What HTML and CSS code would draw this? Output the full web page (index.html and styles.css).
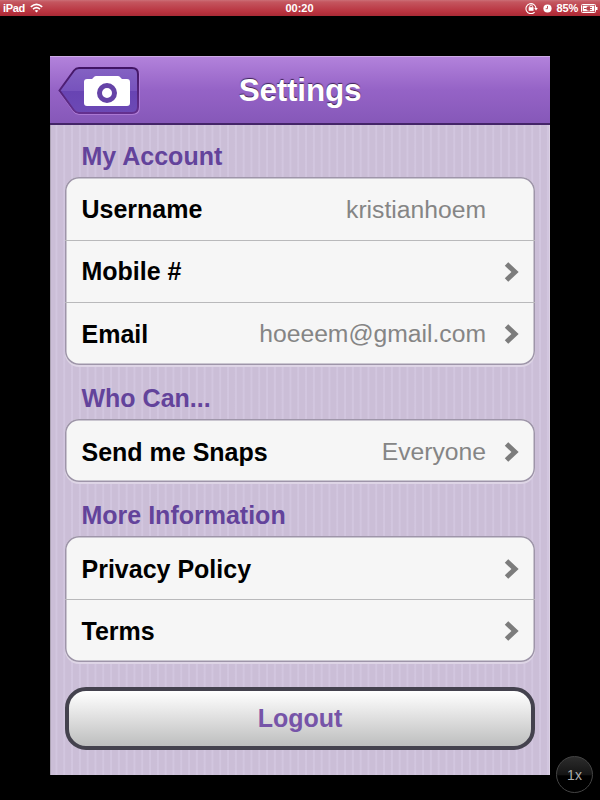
FILE: index.html
```
<!DOCTYPE html>
<html lang="en">
<head>
    <meta charset="UTF-8">
    <meta name="viewport" content="width=device-width, initial-scale=1.0">
    <title>Settings</title>
    <link rel="stylesheet" href="styles.css">
</head>
<body>

    <div class="status-bar">
        <div class="status-left">
            <span class="device">iPad</span>
            <svg class="wifi" width="13" height="10" viewBox="0 0 13 10">
                <path d="M0.8 3.8 Q6.5 -1 12.2 3.8 M3 6.2 Q6.5 3.2 10 6.2" fill="none" stroke="#fff" stroke-width="1.6"/>
                <path d="M4.7 7.7 Q6.5 6.2 8.3 7.7 L6.5 9.6 Z" fill="#fff"/>
            </svg>
        </div>
        <span class="clock">00:20</span>
        <div class="status-right">
            <svg class="lock" width="13" height="12" viewBox="0 0 13 12">
                <path d="M9.6 10.1 A5 5 0 1 1 11 6.6" fill="none" stroke="#fff" stroke-width="1.1"/>
                <path d="M9.2 6 L12.8 6 L11 8.5 Z" fill="#fff"/>
                <rect x="3.7" y="5.2" width="4.8" height="3.6" fill="#fff"/>
                <path d="M4.7 5.4 V4.5 A1.4 1.4 0 0 1 7.5 4.5 V5.4" fill="none" stroke="#fff" stroke-width="0.9"/>
            </svg>
            <svg class="alarm" width="9" height="9" viewBox="0 0 9 9">
                <circle cx="4.5" cy="4.5" r="4.1" fill="#fff"/>
                <path d="M4.5 2 V4.7 H2.7" fill="none" stroke="#b9444c" stroke-width="0.9"/>
            </svg>
            <span class="percent">85%</span>
            <svg class="battery" width="17" height="9" viewBox="0 0 17 9">
                <rect x="0.5" y="0.5" width="14" height="8" rx="1" fill="none" stroke="#fff"/>
                <path d="M1.7 1.7 H13.3 V7.3 H1.7 Z" fill="#fff"/>
                <path d="M15 3 H16.5 V6 H15 Z" fill="#fff"/>
                <path d="M3 4.5 H5.5" stroke="#b9444c" stroke-width="1"/>
                <path d="M9 2.3 H7.7 Q5.3 2.3 5.3 4.5 Q5.3 6.7 7.7 6.7 H9 Z" fill="#b9444c"/>
                <path d="M9 3.5 H11 M9 5.5 H11" stroke="#b9444c" stroke-width="0.9"/>
            </svg>
        </div>
    </div>

    <div class="app">
        <div class="header">
            <svg class="back-button" width="84" height="50" viewBox="0 0 84 50">
                <defs>
                    <linearGradient id="backFill" x1="0" y1="0" x2="0" y2="1">
                        <stop offset="0" stop-color="#8462c3"/>
                        <stop offset="0.5" stop-color="#7753bd"/>
                        <stop offset="0.52" stop-color="#6844b3"/>
                        <stop offset="1" stop-color="#6c49b5"/>
                    </linearGradient>
                    <linearGradient id="backEdge" x1="0" y1="0" x2="0" y2="1">
                        <stop offset="0" stop-color="#421565"/>
                        <stop offset="1" stop-color="#64308f"/>
                    </linearGradient>
                </defs>
                <path d="M21 4.5 H75 Q81 4.5 81 10.5 V43 Q81 49 75 49 H21 Q18 49 16 46.5 L2 27 L16 7 Q18 4.5 21 4.5 Z" fill="none" stroke="#b583da" stroke-width="1.5"/>
                <path d="M21 3 H74 Q80 3 80 9 V42 Q80 48 74 48 H21 Q18 48 16 45.5 L1.5 25.5 L16 5.5 Q18 3 21 3 Z" fill="url(#backFill)" stroke="url(#backEdge)" stroke-width="2"/>
                <path d="M29 14 H34 L36.5 11.5 Q37 11 38 11 H60 Q61 11 61.5 11.5 L64 14 H69 Q72 14 72 17 V38 Q72 41 69 41 H29 Q26 41 26 38 V17 Q26 14 29 14 Z" fill="#fff"/>
                <circle cx="49" cy="28" r="7.5" fill="#fff" stroke="#6543a7" stroke-width="5"/>
            </svg>
            <h1>Settings</h1>
        </div>

        <div class="content">
            <h2>My Account</h2>
            <div class="group">
                <div class="row">
                    <span class="label">Username</span>
                    <span class="value">kristianhoem</span>
                </div>
                <div class="row">
                    <span class="label">Mobile #</span>
                    <svg class="chevron" width="16" height="22" viewBox="0 0 16 22"><path d="M2.5 3 L11 11 L2.5 19" /></svg>
                </div>
                <div class="row">
                    <span class="label">Email</span>
                    <span class="value">hoeeem@gmail.com</span>
                    <svg class="chevron" width="16" height="22" viewBox="0 0 16 22"><path d="M2.5 3 L11 11 L2.5 19" /></svg>
                </div>
            </div>

            <h2>Who Can...</h2>
            <div class="group">
                <div class="row">
                    <span class="label">Send me Snaps</span>
                    <span class="value">Everyone</span>
                    <svg class="chevron" width="16" height="22" viewBox="0 0 16 22"><path d="M2.5 3 L11 11 L2.5 19" /></svg>
                </div>
            </div>

            <h2>More Information</h2>
            <div class="group">
                <div class="row">
                    <span class="label">Privacy Policy</span>
                    <svg class="chevron" width="16" height="22" viewBox="0 0 16 22"><path d="M2.5 3 L11 11 L2.5 19" /></svg>
                </div>
                <div class="row">
                    <span class="label">Terms</span>
                    <svg class="chevron" width="16" height="22" viewBox="0 0 16 22"><path d="M2.5 3 L11 11 L2.5 19" /></svg>
                </div>
            </div>

            <button type="button" class="logout">Logout</button>
        </div>
    </div>

    <div class="scale-button">1x</div>

</body>
</html>
```
FILE: styles.css
```
* {
    box-sizing: border-box;
}
body {
    font-family: "Liberation Sans", Arial, sans-serif;
    background-color: #000;
    margin: 0;
    height: 800px;
    overflow: hidden;
}

/* Status bar */
.status-bar {
    display: grid;
    grid-template-columns: 1fr auto 1fr;
    align-items: center;
    height: 16px;
    padding: 0 2px 0 3px;
    background: linear-gradient(#cb6f76 0, #c4565f 2px, #b8323e 12px, #a92a35 16px);
    color: #fff;
    font-size: 11px;
    font-weight: bold;
}
.status-left, .status-right {
    display: flex;
    align-items: center;
}
.device {
    letter-spacing: -0.3px;
}
.clock {
    margin-left: -2px;
}
.status-left {
    gap: 5px;
}
.status-right {
    justify-content: flex-end;
    gap: 5px;
}
.percent {
    letter-spacing: -0.2px;
}
.battery {
    margin-left: -2px;
}

/* App window */
.app {
    width: 500px;
    height: 719px;
    margin: 40px auto 0;
    background: repeating-linear-gradient(90deg, #cbbed7 0, #cbbed7 5px, #d2c6df 6px, #d2c6df 7px, #cbbed7 7.8px);
    box-shadow: inset 1px 0 0 #aaa1b2, inset -1px 0 0 #ddd3e5;
}
.header {
    display: grid;
    grid-template-columns: 84px 1fr 84px;
    align-items: center;
    height: 69px;
    padding: 0 8px;
    background: linear-gradient(#b282db, #9563c6 50%, #8658b9);
    border-top: 1px solid #cdabe6;
    border-bottom: 2px solid #442568;
}
h1 {
    margin: 0;
    text-align: center;
    font-size: 31.5px;
    letter-spacing: -0.2px;
    color: #fff;
    text-shadow: 0 -1px 1px #3e2458;
}
.content {
    padding: 0 15px;
}
h2 {
    display: flex;
    align-items: flex-end;
    margin: 0;
    height: 54.5px;
    padding: 0 16.5px 1px;
    font-size: 25px;
    line-height: 40px;
    color: #63439b;
}
h2:first-child {
    height: 52px;
}
.group {
    background: #f6f6f6;
    border-radius: 14px;
    box-shadow: inset 0 0 0 1.5px #9e95a9, 0 2px 0 #ded5e6;
}
.row {
    display: flex;
    align-items: center;
    height: 62.6px;
    padding: 3px 15.5px 0 16.5px;
    font-size: 25px;
}
.row + .row {
    padding-top: 1px;
    border-top: 1px solid #b9b9bb;
}
.label {
    flex: 1;
    font-weight: bold;
    color: #000;
}
.value {
    color: #858585;
    font-size: 24.7px;
    margin-right: 33.5px;
}
.value:has(+ .chevron) {
    margin-right: 17.5px;
}
.chevron path {
    fill: none;
    stroke: #7c7c7c;
    stroke-width: 5;
}
.logout {
    display: block;
    width: 470px;
    height: 62.5px;
    margin-top: 25.5px;
    border: 4px solid #44424e;
    border-radius: 21px;
    background: linear-gradient(#fff, #e2e2e2 45%, #bdbebe);
    font-family: inherit;
    font-size: 25px;
    font-weight: bold;
    color: #7654a8;
}

/* Zoom toggle in the screen corner */
.scale-button {
    position: absolute;
    left: 556px;
    top: 756px;
    width: 37px;
    height: 37px;
    border: 1px solid #444;
    border-radius: 50%;
    background: linear-gradient(#2c2c2c, #151515 50%, #000 54%);
    color: #aaa;
    font-size: 14px;
    line-height: 36px;
    text-align: center;
}
```
